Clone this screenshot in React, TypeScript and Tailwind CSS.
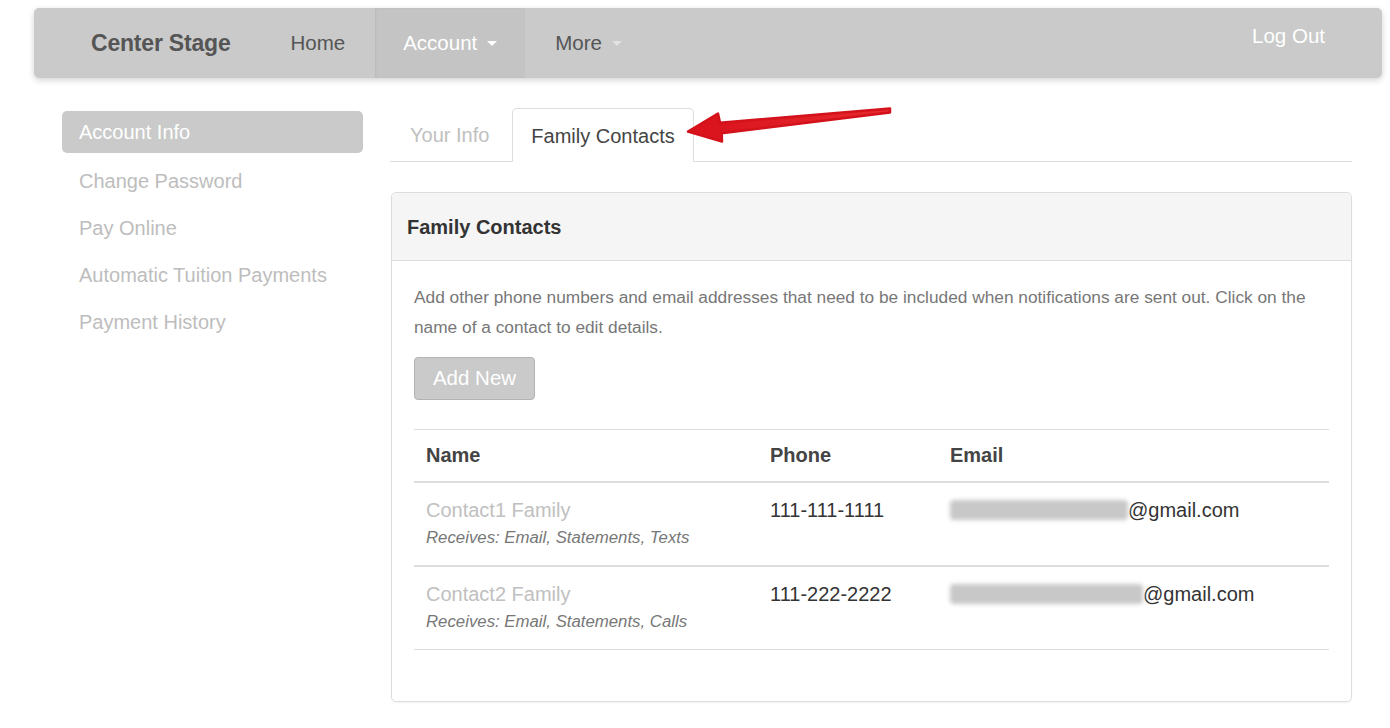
import React from 'react';

const sideLinks = ['Change Password', 'Pay Online', 'Automatic Tuition Payments', 'Payment History'];

const contacts = [
  { name: 'Contact1 Family', receives: 'Receives: Email, Statements, Texts', phone: '111-111-1111', blur: 'w-[178px]' },
  { name: 'Contact2 Family', receives: 'Receives: Email, Statements, Calls', phone: '111-222-2222', blur: 'w-[193px]' },
];

function Caret({ className }: { className: string }) {
  return (
    <svg width="10" height="5" viewBox="0 0 10 5" className={className}>
      <path d="M0 0h10L5 5z" fill="currentColor" />
    </svg>
  );
}

export default function App() {
  return (
    <div className="min-h-[728px] bg-white font-['Liberation_Sans',Arial,sans-serif] text-[#333]">
      <div className="pl-[34px] pr-[8px] pt-2">
        <nav className="flex h-[70px] items-stretch rounded-[5px] bg-[#c9cac9] shadow-[0_2px_6px_rgba(0,0,0,0.18)]">
          <div className="flex items-center pl-[57px] pr-[60px] text-[23px] font-bold tracking-[-0.2px] text-[#555]">Center Stage</div>
          <div className="flex items-center pr-[30px] text-[20.5px] text-[#555]">Home</div>
          <div className="flex w-[150px] items-center gap-[10px] bg-[#c3c4c3] pl-[28px] text-[20.5px] text-white shadow-[inset_1px_0_2px_rgba(0,0,0,0.05)]">
            Account <Caret className="text-white" />
          </div>
          <div className="flex items-center gap-[10px] pl-[30px] text-[20.5px] text-[#555]">
            More <Caret className="text-[#e2e2e2]" />
          </div>
          <div className="ml-auto pr-[57px] pt-[14px] text-[20.5px] leading-[28px] text-white">Log Out</div>
        </nav>
      </div>

      <div className="flex pt-[30px]">
        <aside className="ml-[62px] w-[301px] shrink-0 pt-[3px]">
          <div className="flex h-[42px] items-center rounded-[5px] bg-[#c9cac9] px-[17px] text-[20px] text-white">Account Info</div>
          {sideLinks.map((l) => (
            <div key={l} className="flex h-[47px] items-center px-[17px] pt-[8px] text-[20px] text-[#bdbdbd]">{l}</div>
          ))}
        </aside>

        <main className="ml-[27px] w-[962px]">
          <div className="relative flex h-[54px] items-end border-b border-[#ddd]">
            <div className="flex h-[54px] items-center pl-[20px] pr-[23px] pt-[2px] text-[20px] text-[#c0c0c0]">Your Info</div>
            <div className="-mb-px flex h-[54px] items-center rounded-t-[5px] border border-b-white border-[#ddd] bg-white px-[18px] pt-[2px] text-[20px] text-[#444]">Family Contacts</div>
            <svg className="absolute left-[290px] top-[-8px]" width="220" height="50" viewBox="0 0 220 50">
              <defs>
                <linearGradient id="ar" x1="0" x2="1" y1="0" y2="0">
                  <stop offset="0" stopColor="#d9111b" />
                  <stop offset="1" stopColor="#e62a2e" />
                </linearGradient>
              </defs>
              <path
                d="M8 31.5 L38 13.5 L40 22.7 L210 8.6 L210 12.4 L41.7 33.3 L42 41.5 Z"
                fill="url(#ar)"
                stroke="#d3121c"
                strokeWidth="2.5"
                strokeLinejoin="round"
              />
            </svg>
          </div>

          <section className="mt-[30px] ml-px rounded-[5px] border border-[#ddd] shadow-[0_1px_2px_rgba(0,0,0,0.05)]">
            <div className="flex h-[68px] items-center rounded-t-[5px] border-b border-[#ddd] bg-[#f5f5f5] px-[15px] text-[20px] font-bold text-[#333]">Family Contacts</div>
            <div className="px-[22px] pb-[51px] pt-[21px]">
              <p className="text-[17.3px] leading-[30px] text-[#777]">
                Add other phone numbers and email addresses that need to be included when notifications are sent out. Click on the name of a contact to edit details.
              </p>
              <button className="mt-[15px] flex h-[43px] w-[121px] items-center justify-center rounded-[4px] border border-[#b3b3b3] bg-[#c9cac9] text-[20.5px] text-white">Add New</button>
              <table className="mt-[29px] w-full border-collapse text-left">
                <thead>
                  <tr className="h-[52px] border-t border-[#ddd]">
                    <th className="w-[344px] border-b-2 border-[#ddd] px-[12px] text-[20px] font-bold text-[#444]">Name</th>
                    <th className="w-[180px] border-b-2 border-[#ddd] px-[12px] text-[20px] font-bold text-[#444]">Phone</th>
                    <th className="border-b-2 border-[#ddd] px-[12px] text-[20px] font-bold text-[#444]">Email</th>
                  </tr>
                </thead>
                <tbody>
                  {contacts.map((c, i) => (
                    <tr key={c.name} className={i === 0 ? 'border-b-2 border-[#ddd]' : 'border-b border-[#ddd]'}>
                      <td className="px-[12px] pb-[13px] pt-[13px] align-top">
                        <div className="text-[20px] leading-[28px] text-[#c0c0c0]">{c.name}</div>
                        <div className="text-[16.8px] italic leading-[28px] text-[#777]">{c.receives}</div>
                      </td>
                      <td className="px-[12px] pt-[13px] align-top text-[20px] leading-[28px] text-[#333]">{c.phone}</td>
                      <td className="px-[12px] pt-[13px] align-top">
                        <div className="flex items-center text-[20px] leading-[28px] text-[#333]">
                          <span className={`${c.blur} h-[20px] rounded-sm bg-[#c8c8c8] blur-[2px]`} />
                          <span>@gmail.com</span>
                        </div>
                      </td>
                    </tr>
                  ))}
                </tbody>
              </table>
            </div>
          </section>
        </main>
      </div>
    </div>
  );
}
